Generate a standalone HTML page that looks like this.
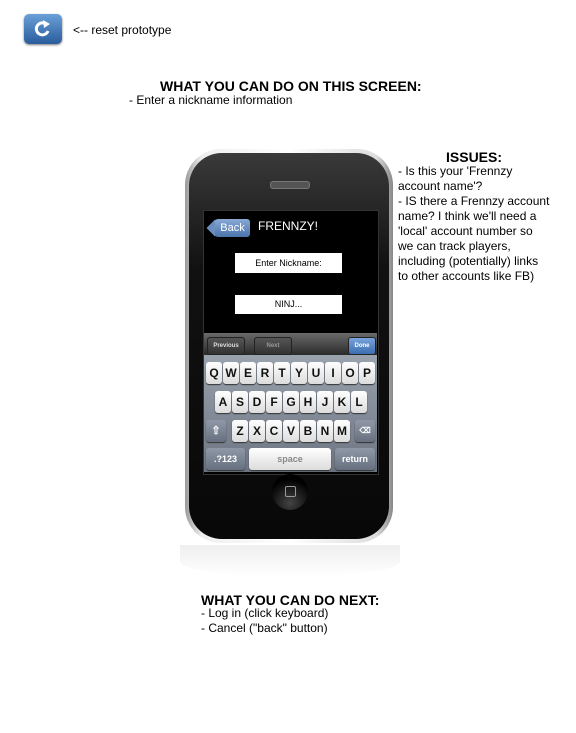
<!DOCTYPE html><html><head><style>
body{margin:0;width:576px;height:733px;background:#fff;position:relative;font-family:"Liberation Sans",Arial,sans-serif;overflow:hidden}
.a{position:absolute}
.t{font-size:12px;color:#000;line-height:15px}
.b{font-weight:bold;font-size:14px}
.k{position:absolute;width:16px;height:22px;background:linear-gradient(#fff,#dcdcdc);border-radius:3px;box-shadow:0 1px 1px #333;font-weight:bold;font-size:12px;text-align:center;line-height:22px;color:#111}
.g{position:absolute;height:22px;background:linear-gradient(#8e98a6,#66707e);border-radius:3px;box-shadow:0 1px 1px #333;color:#fff;font-weight:bold;font-size:9px;text-align:center;line-height:22px}
.tb{position:absolute;top:337px;height:16px;border-radius:3px;font-size:6px;font-weight:bold;color:#ddd;text-align:center;line-height:16px;background:linear-gradient(#555,#333);border:1px solid #222}
</style></head><body>
<div class="a" style="left:24px;top:14px;width:38px;height:30px;border-radius:5px;background:linear-gradient(#6aa0d8,#2a5c9c);box-shadow:0 1px 2px #777">
<svg width="38" height="30" viewBox="0 0 38 30"><path d="M23 11 A6 6 0 1 0 24 17" stroke="#fff" stroke-width="3" fill="none"/><path d="M19 6 L26 10 L20 14 Z" fill="#fff"/></svg></div>
<div class="a t" style="left:73px;top:23px">&lt;-- reset prototype</div>
<div class="a b" style="left:160px;top:78px">WHAT YOU CAN DO ON THIS SCREEN:</div>
<div class="a t" style="left:129px;top:93px">- Enter a nickname information</div>
<div class="a b" style="left:446px;top:149px">ISSUES:</div>
<div class="a t" style="left:398px;top:164px;width:152px">- Is this your 'Frennzy account name'?<br>- IS there a Frennzy account name? I think we'll need a 'local' account number so we can track players, including (potentially) links to other accounts like FB)</div>
<!-- phone -->
<div class="a" style="left:185px;top:149px;width:208px;height:394px;border-radius:36px;background:linear-gradient(90deg,#999,#eee 8%,#fff 50%,#ddd 92%,#888)"></div>
<div class="a" style="left:189px;top:153px;width:200px;height:386px;border-radius:33px;background:linear-gradient(#3a3a3a,#111 30%,#080808)"></div>
<div class="a" style="left:270px;top:181px;width:38px;height:6px;border-radius:3px;background:#555;border:1px solid #777"></div>
<div class="a" style="left:203px;top:210px;width:174px;height:263px;background:#000;border:1px solid #333"></div>
<div class="a" style="left:209px;top:222px;width:12px;height:12px;background:#6a8ec0;transform:rotate(45deg)"></div>
<div class="a" style="left:215px;top:219px;width:35px;height:18px;background:linear-gradient(#89a9d4,#4a74ad);border-radius:3px;color:#fff;font-size:11px;line-height:18px;text-align:center">Back</div>
<div class="a" style="left:258px;top:219px;color:#fff;font-size:12px">FRENNZY!</div>
<div class="a" style="left:235px;top:253px;width:107px;height:20px;background:#fff;font-size:9px;text-align:center;line-height:20px">Enter Nickname:</div>
<div class="a" style="left:235px;top:295px;width:107px;height:19px;background:#fff;font-size:9px;text-align:center;line-height:19px">NINJ...</div>
<div class="a" style="left:204px;top:333px;width:173px;height:22px;background:linear-gradient(#6a6a6a,#2a2a2a)"></div>
<div class="tb" style="left:207px;width:36px">Previous</div>
<div class="tb" style="left:254px;width:36px;color:#999">Next</div>
<div class="tb" style="left:348px;width:26px;background:linear-gradient(#7aa4dc,#3b6db0);color:#fff">Done</div>
<div class="a" style="left:204px;top:355px;width:173px;height:117px;background:linear-gradient(#9aa2ae,#6c7482)"></div>
<div class="k" style="left:206px;top:362px">Q</div><div class="k" style="left:223px;top:362px">W</div><div class="k" style="left:240px;top:362px">E</div><div class="k" style="left:257px;top:362px">R</div><div class="k" style="left:274px;top:362px">T</div><div class="k" style="left:291px;top:362px">Y</div><div class="k" style="left:308px;top:362px">U</div><div class="k" style="left:325px;top:362px">I</div><div class="k" style="left:342px;top:362px">O</div><div class="k" style="left:359px;top:362px">P</div>
<div class="k" style="left:215px;top:391px">A</div><div class="k" style="left:232px;top:391px">S</div><div class="k" style="left:249px;top:391px">D</div><div class="k" style="left:266px;top:391px">F</div><div class="k" style="left:283px;top:391px">G</div><div class="k" style="left:300px;top:391px">H</div><div class="k" style="left:317px;top:391px">J</div><div class="k" style="left:334px;top:391px">K</div><div class="k" style="left:351px;top:391px">L</div>
<div class="g" style="left:206px;top:420px;width:20px;font-size:11px">⇧</div>
<div class="k" style="left:232px;top:420px">Z</div><div class="k" style="left:249px;top:420px">X</div><div class="k" style="left:266px;top:420px">C</div><div class="k" style="left:283px;top:420px">V</div><div class="k" style="left:300px;top:420px">B</div><div class="k" style="left:317px;top:420px">N</div><div class="k" style="left:334px;top:420px">M</div>
<div class="g" style="left:355px;top:420px;width:20px;font-size:8px">⌫</div>
<div class="g" style="left:206px;top:448px;width:39px">.?123</div>
<div class="k" style="left:249px;top:448px;width:82px;font-size:9px;color:#888;line-height:22px">space</div>
<div class="g" style="left:335px;top:448px;width:40px">return</div>
<div class="a" style="left:272px;top:474px;width:36px;height:36px;border-radius:50%;background:radial-gradient(circle at 50% 80%,#444,#000 70%)"></div>
<div class="a" style="left:285px;top:486px;width:9px;height:9px;border:1.5px solid #999;border-radius:2px"></div>
<div class="a" style="left:180px;top:545px;width:220px;height:32px;background:linear-gradient(#e4e4e4,#fff);border-radius:0 0 50% 50%;opacity:.6"></div>
<div class="a b" style="left:201px;top:592px">WHAT YOU CAN DO NEXT:</div>
<div class="a t" style="left:201px;top:606px">- Log in (click keyboard)<br>- Cancel ("back" button)</div>
</body></html>
